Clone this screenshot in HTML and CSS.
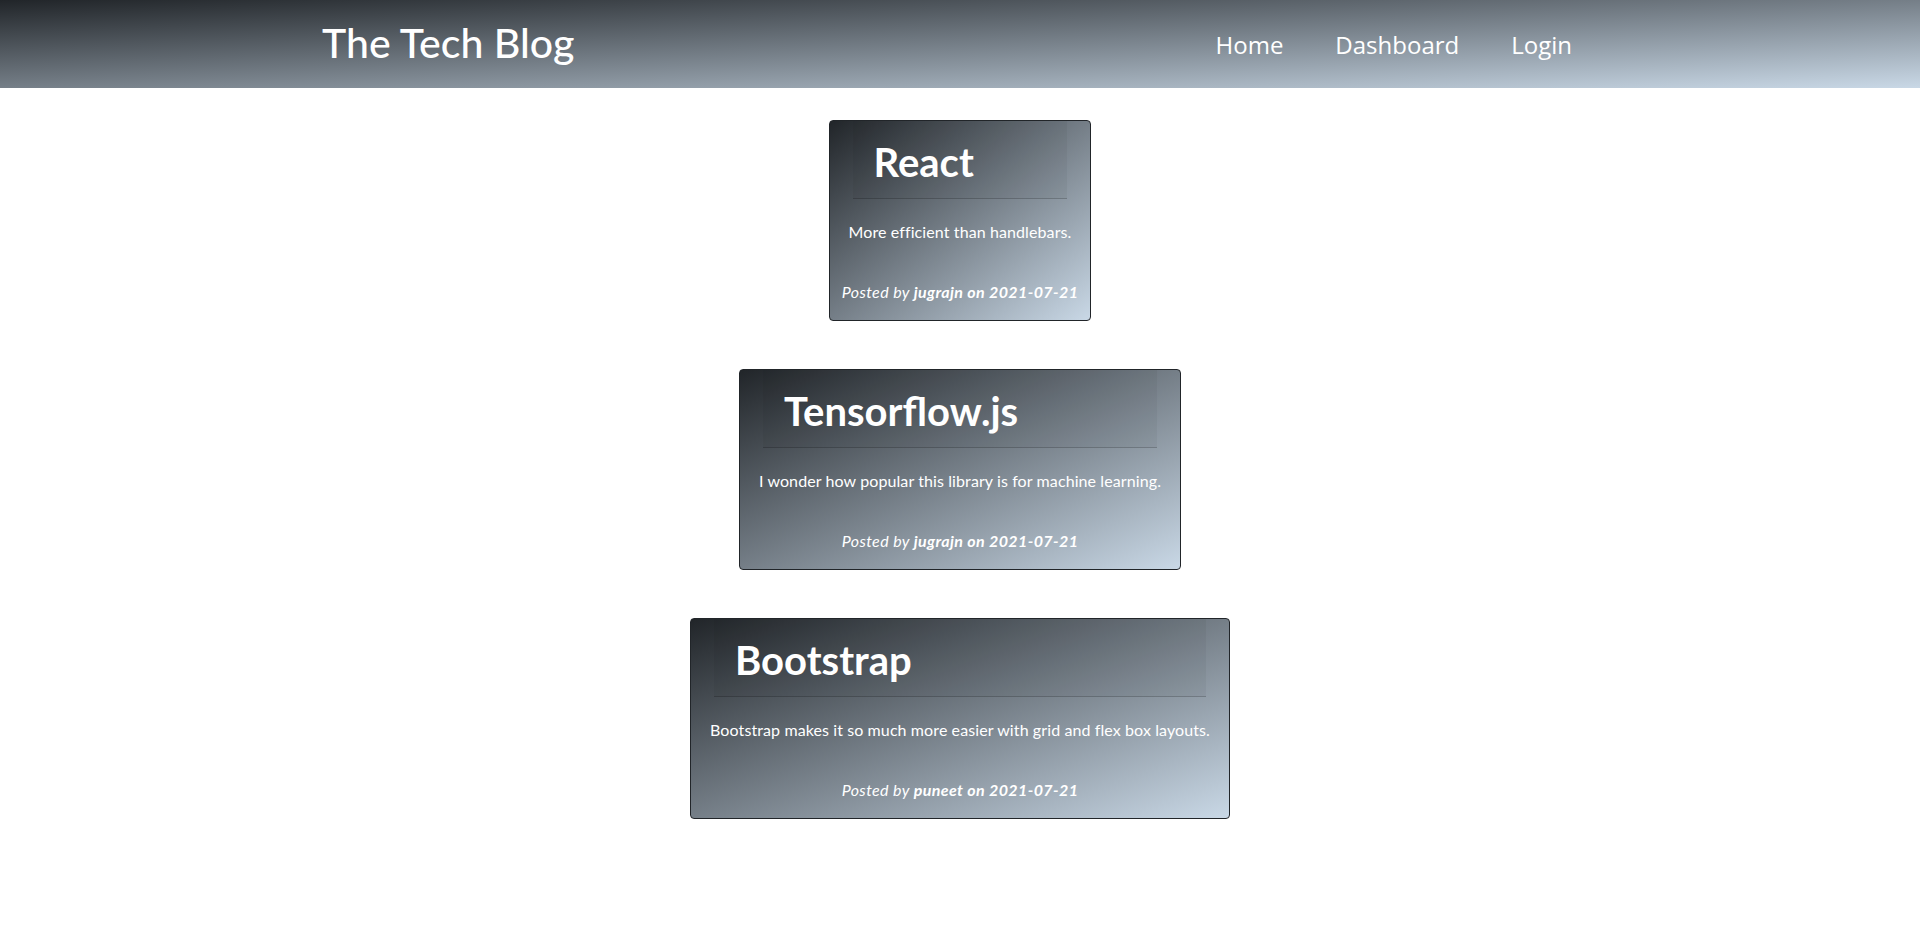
FILE: index.html
```html
<!DOCTYPE html>
<html lang="en">
<head>
<meta charset="utf-8">
<title>The Tech Blog</title>
<link rel="stylesheet" href="styles.css">
</head>
<body>
<header class="site-header">
  <div class="header-inner">
    <a class="brand" href="#">The Tech Blog</a>
    <nav class="nav">
      <a class="nav-link" href="#">Home</a>
      <a class="nav-link" href="#">Dashboard</a>
      <a class="nav-link" href="#">Login</a>
    </nav>
  </div>
</header>
<main class="posts">
  <article class="card">
    <div class="card-header"><h1 class="card-title">React</h1></div>
    <div class="card-body"><p class="card-text">More efficient than handlebars.</p></div>
    <div class="card-footer"><em>Posted by <strong>jugrajn on 2021-07-21</strong></em></div>
  </article>
  <article class="card">
    <div class="card-header"><h1 class="card-title">Tensorflow.js</h1></div>
    <div class="card-body"><p class="card-text">I wonder how popular this library is for machine learning.</p></div>
    <div class="card-footer"><em>Posted by <strong>jugrajn on 2021-07-21</strong></em></div>
  </article>
  <article class="card">
    <div class="card-header"><h1 class="card-title">Bootstrap</h1></div>
    <div class="card-body"><p class="card-text">Bootstrap makes it so much more easier with grid and flex box layouts.</p></div>
    <div class="card-footer"><em>Posted by <strong>puneet on 2021-07-21</strong></em></div>
  </article>
</main>
</body>
</html>
```

FILE: styles.css
```css
* { box-sizing: border-box; }

html, body {
  margin: 0;
  padding: 0;
  background: #ffffff;
  font-family: Lato, "Open Sans", "Liberation Sans", sans-serif;
  color: #ffffff;
}

.site-header {
  height: 88px;
  background: linear-gradient(to bottom right, #212529, #c9d8e6);
}

.header-inner {
  max-width: 1276px;
  height: 100%;
  margin: 0 auto;
  display: flex;
  align-items: center;
  justify-content: space-between;
}

.brand {
  color: #ffffff;
  text-decoration: none;
  font-size: 41px;
  font-weight: 500;
  line-height: 1;
  margin-top: -4px;
}

.nav {
  display: flex;
  align-items: center;
}

.nav-link {
  color: #ffffff;
  text-decoration: none;
  font-family: "Open Sans", Lato, sans-serif;
  font-size: 24px;
  line-height: 1;
  padding: 0 26px;
  margin-top: 2px;
}

.posts {
  display: flex;
  flex-direction: column;
  align-items: center;
  gap: 48px;
  padding-top: 32px;
  padding-bottom: 40px;
}

.card {
  width: fit-content;
  border: 1px solid #212529;
  border-radius: 4px;
  background: linear-gradient(to bottom right, #212529, #c9d8e6);
  text-align: center;
  overflow: hidden;
}

.card-header {
  margin: 0 23px;
  padding: 17px 21px 12px;
  background: rgba(0, 0, 0, 0.04);
  border-bottom: 1px solid rgba(0, 0, 0, 0.18);
  text-align: left;
}

.card-title {
  margin: 0;
  font-size: 40px;
  font-weight: 700;
  line-height: 48px;
}

.card-body {
  padding: 21px 19px 0;
}

.card-text {
  margin: 0 0 36px;
  font-size: 16px;
  line-height: 24px;
  letter-spacing: 0.1px;
}

.card-footer {
  padding: 0 10px 16px;
  font-size: 16px;
  line-height: 24px;
  letter-spacing: 0.4px;
}

.card-footer strong { font-weight: 700; }
```
